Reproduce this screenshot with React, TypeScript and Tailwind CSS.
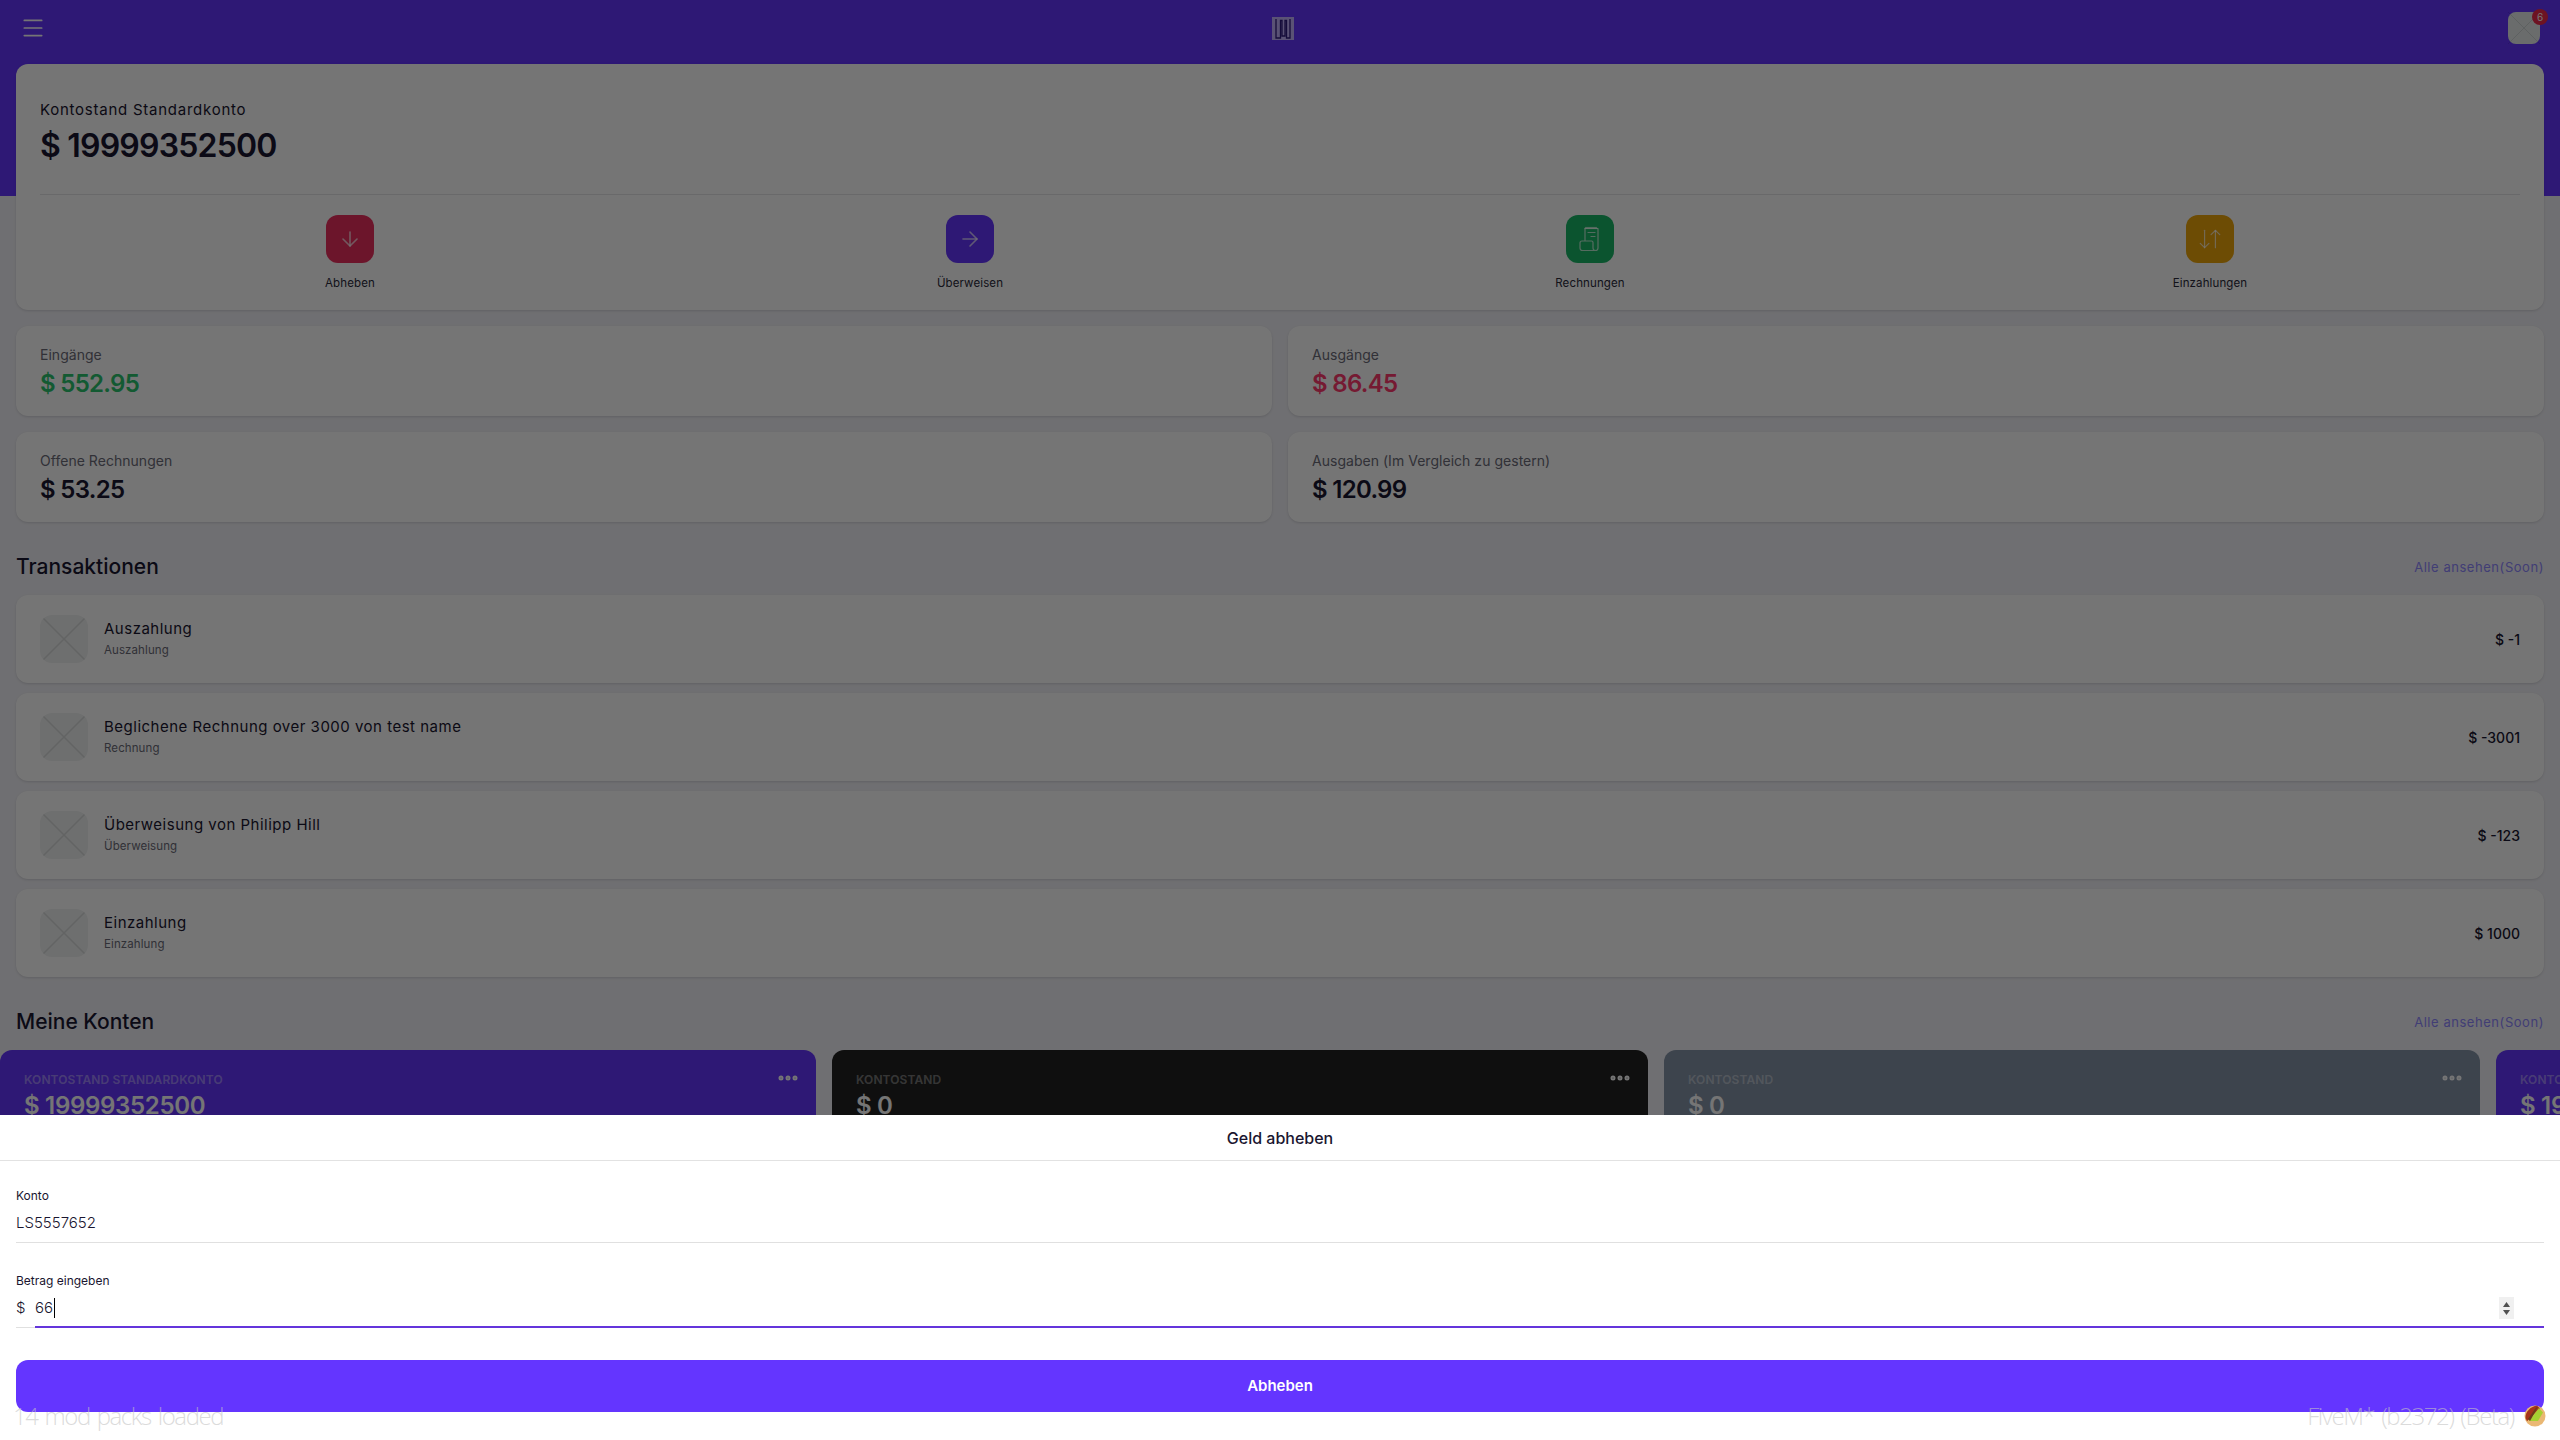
import React from "react";
import { ArrowDown, ArrowDownUp, ArrowRight, Menu, MoreHorizontal } from "lucide-react";

function Receipt() {
  return (
    <svg width="28" height="28" viewBox="0 0 28 28" fill="none" stroke="currentColor" strokeWidth="1.2" strokeLinecap="round" strokeLinejoin="round">
      <path d="M9 16V3.5h13V23a2.5 2.5 0 0 1-2.5 2.5H6.5A2.5 2.5 0 0 1 4 23v-5a2 2 0 0 1 2-2h9.5A1.5 1.5 0 0 1 17 17.5V23a2.5 2.5 0 0 0 2.5 2.5" />
      <path d="M9 3.5l1 -1 1 1 1 -1 1 1 1 -1 1 1 1 -1 1 1 1 -1 1 1 1 -1 1 1" />
      <path d="M12 7.5h7M15 11.5h4" />
    </svg>
  );
}

function Logo() {
  return (
    <svg width="22" height="23" viewBox="0 0 22 23" className="block">
      <rect width="22" height="23" fill="#fff" fillOpacity="0.62" />
      <path d="M4 2v19h4.5V3.5h1.5V19h3V3.5h1.5V21H18V2" fill="none" stroke="#2f1b7f" strokeWidth="1.3" />
    </svg>
  );
}

function Placeholder({ className }: { className: string }) {
  return (
    <svg viewBox="0 0 48 48" preserveAspectRatio="none" className={className}>
      <path d="M0 0L48 48M48 0L0 48" stroke="#000" strokeOpacity="0.1" strokeWidth="1.5" />
    </svg>
  );
}

function Taco() {
  return (
    <svg width="22" height="22" viewBox="0 0 22 22">
      <circle cx="11" cy="11" r="10.5" fill="#eab874" />
      <path d="M1.5 13C1 7 7 1 13 .8l3 2.4-13 13z" fill="#a5341c" />
      <path d="M5 16L15 3l4 4.5-5 8.5z" fill="#a6d132" />
      <path d="M4 14L12 2.5l2-.7L6 16z" fill="#6b3d1a" />
    </svg>
  );
}

const actions = [
  { label: "Abheben", color: "bg-[#ec2f5f]", icon: <ArrowDown size={24} strokeWidth={1.6} /> },
  { label: "Überweisen", color: "bg-[#6435ff]", icon: <ArrowRight size={24} strokeWidth={1.6} /> },
  { label: "Rechnungen", color: "bg-[#1ab868]", icon: <Receipt /> },
  { label: "Einzahlungen", color: "bg-[#eea50a]", icon: <ArrowDownUp size={26} strokeWidth={1.1} /> },
];

const stats = [
  { label: "Eingänge", value: "$ 552.95", color: "text-[#2bc46e]" },
  { label: "Ausgänge", value: "$ 86.45", color: "text-[#ff3a6e]" },
  { label: "Offene Rechnungen", value: "$ 53.25", color: "text-[#1a1630]" },
  { label: "Ausgaben (Im Vergleich zu gestern)", value: "$ 120.99", color: "text-[#1a1630]" },
];

const rows = [
  { title: "Auszahlung", sub: "Auszahlung", amount: "$ -1" },
  { title: "Beglichene Rechnung over 3000 von test name", sub: "Rechnung", amount: "$ -3001" },
  { title: "Überweisung von Philipp Hill", sub: "Überweisung", amount: "$ -123" },
  { title: "Einzahlung", sub: "Einzahlung", amount: "$ 1000" },
];

const accounts = [
  { label: "KONTOSTAND STANDARDKONTO", value: "$ 19999352500", color: "bg-[#6435ff]" },
  { label: "KONTOSTAND", value: "$ 0", color: "bg-[#222222]" },
  { label: "KONTOSTAND", value: "$ 0", color: "bg-[#8694a8]" },
  { label: "KONTOSTAND STANDARDKONTO", value: "$ 19999352500", color: "bg-[#6435ff]" },
];

function SectionHead({ title }: { title: string }) {
  return (
    <div className="mt-[31px] flex h-7 items-center justify-between">
      <h2 className="text-[21px] leading-7 font-medium text-[#1a1630]">{title}</h2>
      <span className="text-[13px] leading-5 tracking-[0.55px] text-[#8f87ff]">Alle ansehen(Soon)</span>
    </div>
  );
}

export default function App() {
  return (
    <div className="relative h-screen w-full overflow-hidden bg-[#f2f2f8] [font-family:Inter,sans-serif] text-[#1a1630]">
      <div className="h-[196px] bg-[#6435ff]">
        <header className="flex h-16 items-start justify-between pt-[12px] pr-[20px] pl-[20px]">
          <div className="flex h-8 w-8 items-center text-white">
            <Menu size={26} strokeWidth={1.6} />
          </div>
          <div className="mt-[5px] ml-[6px]">
            <Logo />
          </div>
          <div className="relative h-8 w-8 rounded-lg bg-[#e6ecec]">
            <Placeholder className="h-8 w-8" />
            <span className="absolute -top-[3px] -right-[8px] flex h-4 w-4 items-center justify-center rounded-full bg-[#ee2a4a] text-[10px] leading-none text-white">
              6
            </span>
          </div>
        </header>
      </div>

      <main className="-mt-[132px] px-4">
        <section className="h-[246px] rounded-xl bg-white px-6 pt-[34px] shadow-sm">
          <p className="text-[15px] leading-6 tracking-[0.75px]">Kontostand Standardkonto</p>
          <p className="mt-[2px] text-[32px] leading-[44px] font-semibold tracking-[-0.8px]">$ 19999352500</p>
          <div className="mt-[26px] border-t border-[#e4e4e8]" />
          <div className="mt-[20px] grid grid-cols-4">
            {actions.map((a) => (
              <div key={a.label} className="flex flex-col items-center">
                <div className={`flex h-12 w-12 items-center justify-center rounded-xl text-white/70 ${a.color}`}>{a.icon}</div>
                <span className="mt-3 text-[11.5px] leading-4 tracking-[0.12px] text-[#2a2a3a]">{a.label}</span>
              </div>
            ))}
          </div>
        </section>

        <section className="mt-4 grid grid-cols-2 gap-4">
          {stats.map((s) => (
            <div key={s.label} className="h-[90px] rounded-xl bg-white px-6 pt-[19px] shadow-sm">
              <p className="text-[14px] leading-5 tracking-[0.03px] text-[#6b6b78]">{s.label}</p>
              <p className={`mt-[3px] text-2xl leading-8 font-semibold tracking-[-0.7px] ${s.color}`}>{s.value}</p>
            </div>
          ))}
        </section>

        <SectionHead title="Transaktionen" />
        <section className="mt-[14px] flex flex-col gap-[10px]">
          {rows.map((r) => (
            <div key={r.title} className="flex h-[88px] items-center justify-between rounded-xl bg-white px-6 shadow-sm">
              <div className="flex items-center gap-4">
                <div className="h-12 w-12 overflow-hidden rounded-xl bg-[#f0f2f2]">
                  <Placeholder className="h-12 w-12" />
                </div>
                <div className="pb-[3px]">
                  <p className="text-[15px] leading-6 tracking-[0.5px] text-[#1a1630]">{r.title}</p>
                  <p className="mt-px text-[11.5px] leading-4 tracking-[0.1px] text-[#6b6b78]">{r.sub}</p>
                </div>
              </div>
              <span className="text-[14px] font-medium">{r.amount}</span>
            </div>
          ))}
        </section>

        <SectionHead title="Meine Konten" />
        <section className="-mx-4 mt-[14px] flex gap-4">
          {accounts.map((c, i) => (
            <div key={i} className={`h-[180px] w-[816px] shrink-0 rounded-xl px-6 pt-[19px] ${c.color}`}>
              <div className="flex items-center justify-between">
                <span className="text-[12px] leading-4 font-semibold tracking-[0.1px] text-white/40">{c.label}</span>
                <MoreHorizontal size={24} strokeWidth={3} className="-mr-[8px] -mt-[3px] text-white" />
              </div>
              <p className="-mt-[2px] text-[24px] leading-9 font-semibold tracking-[-0.3px] text-white">{c.value}</p>
            </div>
          ))}
        </section>
      </main>

      {/* dimming layer of the open sheet */}
      <div className="absolute inset-0 bg-black/[0.54]" />

      <div className="absolute inset-x-0 bottom-0 h-[325px] bg-white text-[#1a1630]">
        <div className="flex h-[46px] items-center justify-center border-b border-[#e2e2e2] text-[16px] font-medium">Geld abheben</div>
        <div className="px-4">
          <label className="mt-[27px] block text-[12px] leading-4">Konto</label>
          <div className="mt-[9px] h-[30px] border-b border-[#e0e0e0] text-[15px] leading-5 font-light">LS5557652</div>

          <label className="mt-[30px] block text-[12px] leading-4">Betrag eingeben</label>
          <div className="mt-[9px] flex h-[30px] items-start text-[15px] leading-5 font-light">
            <span className="h-full w-[19px] border-b border-[#e0e0e0] pb-2">$</span>
            <div className="flex h-full flex-1 items-start justify-between border-b-2 border-[#6435db]">
              <span className="flex items-center">
                66
                <span className="ml-px h-[20px] w-px bg-black" />
              </span>
              <span className="mr-[30px] -mt-px flex h-[22px] w-[15px] flex-col items-center justify-center gap-[3px] bg-[#f0f0f0]">
                <svg width="7" height="5" viewBox="0 0 7 5"><path d="M3.5 0L7 5H0z" fill="#505050" /></svg>
                <svg width="7" height="5" viewBox="0 0 7 5"><path d="M3.5 5L7 0H0z" fill="#505050" /></svg>
              </span>
            </div>
          </div>

          <button className="mt-8 flex h-[52px] w-full items-center justify-center rounded-xl bg-[#6435ff] text-[15px] font-semibold text-white">
            Abheben
          </button>
        </div>
      </div>

      {/* game client text drawn over the page */}
      <div className="absolute inset-x-0 bottom-[9px] flex h-[30px] items-center justify-between pr-[14px] pl-[13px] [font-family:'Open_Sans',sans-serif] text-[24px] font-light tracking-[-1.4px] [word-spacing:2px] text-[#c4c4c4]/60">
        <span>14 mod packs loaded</span>
        <span className="flex items-center gap-[10px]">
          FiveM* (b2372) (Beta)
          <Taco />
        </span>
      </div>
    </div>
  );
}
